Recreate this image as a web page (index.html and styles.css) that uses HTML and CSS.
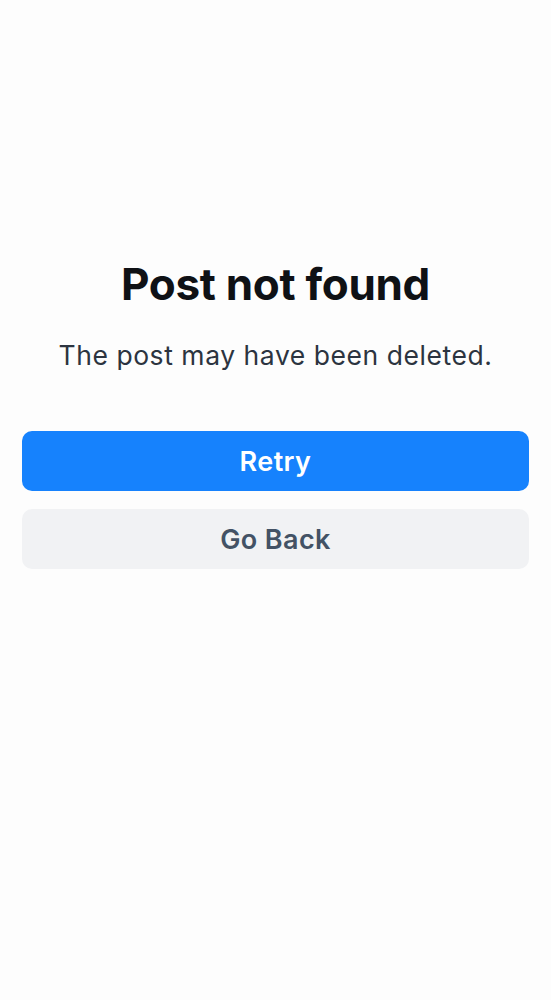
FILE: index.html
```html
<!DOCTYPE html>
<html lang="en">

<head>
    <meta charset="UTF-8">
    <meta name="viewport" content="width=device-width, initial-scale=1.0">
    <title>Post not found</title>

    <link rel="stylesheet" href="styles.css">
</head>

<body>
    <div class="notFound">
        <h1 class="title">Post not found</h1>
        <p class="desc">The post may have been deleted.</p>
        <div class="actions">
            <button class="btn retry">Retry</button>
            <button class="btn back">Go Back</button>
        </div>
    </div>
</body>

</html>
```

FILE: styles.css
```css
html {
    height: 100%;
}

body {
    height: 100%;
    margin: 0;
    background-color: #fdfdfd;
    font-family: Inter, "Noto Sans", sans-serif;
}

.notFound {
    padding: 256px 22px 0;
    text-align: center;
}

.title {
    margin: 0;
    font-size: 44px;
    font-weight: 700;
    line-height: 56px;
    color: #0f1115;
    letter-spacing: -0.3px;
}

.desc {
    margin: 25px 0 0;
    font-size: 26.5px;
    line-height: 36px;
    color: #2c3440;
    letter-spacing: 0.55px;
}

.actions {
    margin-top: 58px;
    display: flex;
    flex-direction: column;
    gap: 18px;
}

.btn {
    height: 60px;
    border: none;
    border-radius: 10px;
    font-family: inherit;
    font-size: 27px;
    font-weight: 600;
    letter-spacing: 0.4px;
}

.retry {
    background-color: #1682fd;
    color: #fff;
}

.back {
    background-color: #f1f2f4;
    color: #435265;
}
```
